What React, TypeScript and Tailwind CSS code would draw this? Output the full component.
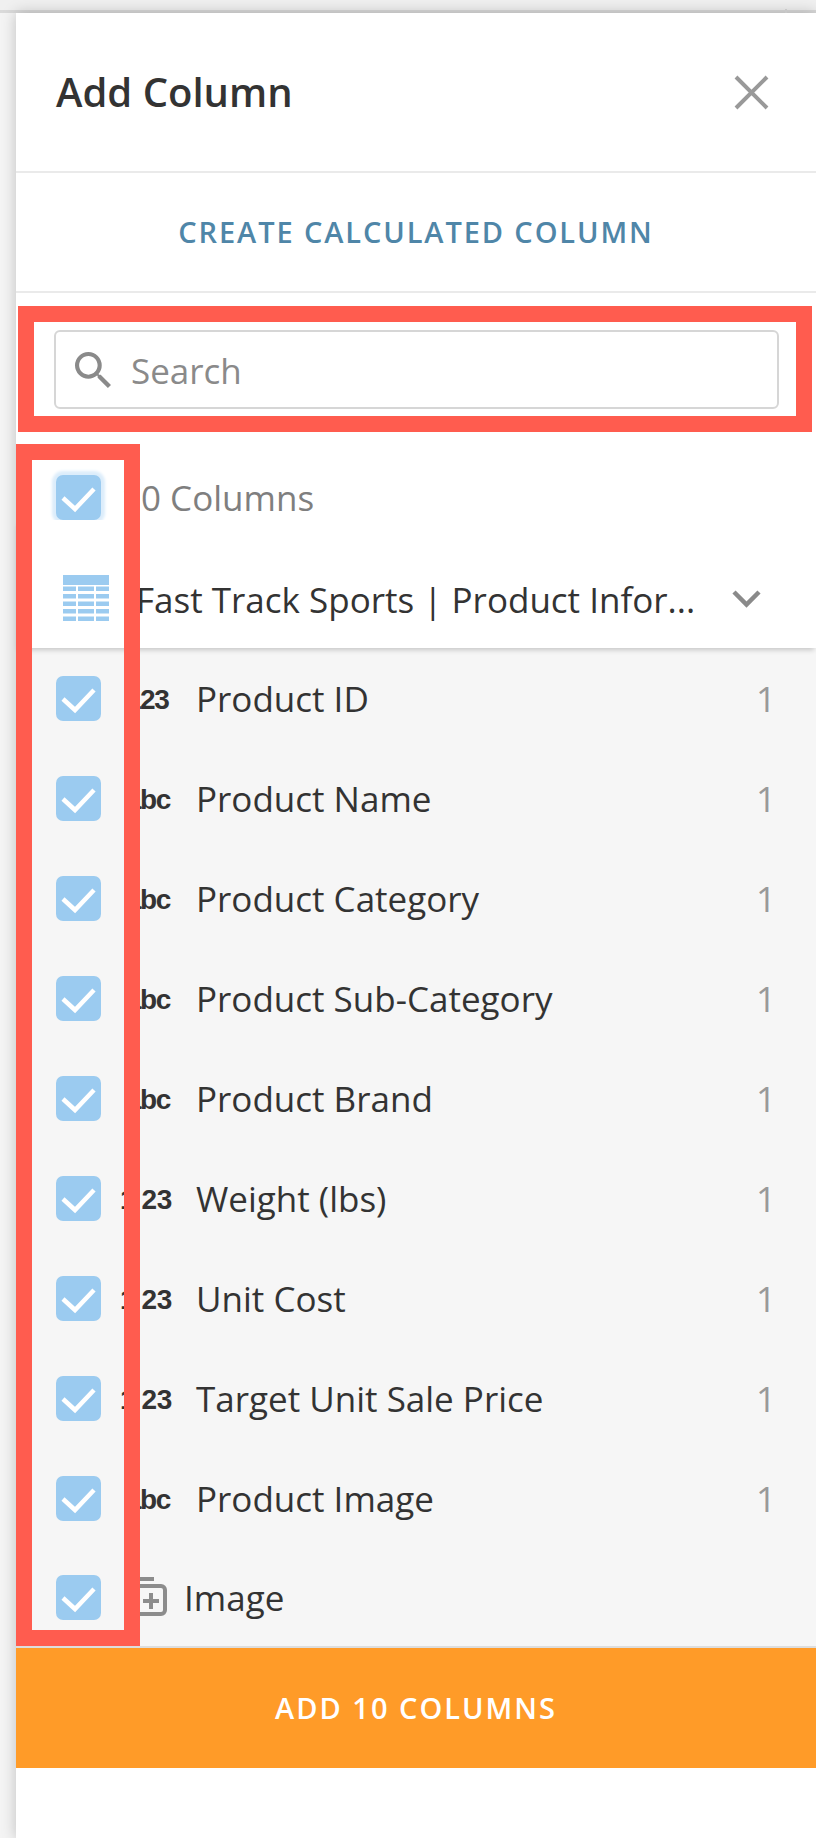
const columns = [
  { name: "Product ID", kind: "id" },
  { name: "Product Name", kind: "abc" },
  { name: "Product Category", kind: "abc" },
  { name: "Product Sub-Category", kind: "abc" },
  { name: "Product Brand", kind: "abc" },
  { name: "Weight (lbs)", kind: "num" },
  { name: "Unit Cost", kind: "num" },
  { name: "Target Unit Sale Price", kind: "num" },
  { name: "Product Image", kind: "abc" },
];

function Check({ focused = false }: { focused?: boolean }) {
  return (
    <span
      className={`flex h-[45px] w-[45px] shrink-0 items-center justify-center rounded-[7px] bg-[#9bcbf0] ${
        focused ? "shadow-[0_0_3px_4px_#dcedfb]" : ""
      }`}
    >
      <svg viewBox="0 0 45 45" className="h-[45px] w-[45px]" fill="none" stroke="#fff" strokeWidth="4.5">
        <path d="M7 23l12 11L38 14" />
      </svg>
    </span>
  );
}

function TableIcon() {
  const ys = [11.5, 19, 26.5, 34, 41.5];
  return (
    <svg viewBox="0 0 46 46" className="-mt-1 h-[46px] w-[46px]" fill="#9bcbf0">
      <rect x="0" y="0" width="46" height="10" />
      {ys.map((y) => (
        <g key={y}>
          <rect x="0" y={y} width="13" height="4.5" />
          <rect x="15" y={y} width="16" height="4.5" />
          <rect x="33" y={y} width="13" height="4.5" />
        </g>
      ))}
    </svg>
  );
}

function TypeIcon({ kind }: { kind: string }) {
  const base = "mt-1 w-[95px] shrink-0 whitespace-nowrap text-[28px] font-bold leading-none text-[#333] font-['Liberation_Sans',sans-serif]";
  if (kind === "num") {
    return (
      <span className={`${base} pl-[19px] tracking-[-0.5px]`}>
        <span className="tracking-[6px]">1</span>23
      </span>
    );
  }
  return <span className={`${base} pl-[25px] tracking-[-1.5px]`}>{kind === "abc" ? "abc" : "123"}</span>;
}

export default function App() {
  return (
    <div className="relative h-[1838px] w-[816px] overflow-hidden bg-[#f4f4f4] font-['Open_Sans',sans-serif]">
      <div className="h-[13px] border-b-[3px] border-[#dadada] bg-[#f0f0f0]" />
      <div className="absolute left-[785px] top-[9px] h-1 w-[2px] bg-[#c8c8c8]" />
      <div className="ml-4 h-[1825px] bg-white shadow-[0_0_14px_rgba(0,0,0,0.22)]">
        <div className="flex h-[160px] items-center justify-between border-b-2 border-[#eaeaea] pl-10 pr-[47px]">
          <h1 className="text-[40px] font-[550] leading-none text-[#333]">Add Column</h1>
          <svg viewBox="0 0 35 35" className="h-[35px] w-[35px]" fill="none" stroke="#999" strokeWidth="4">
            <path d="M2 2l31 31M33 2L2 33" />
          </svg>
        </div>
        <div className="flex h-[120px] items-center justify-center border-b-2 border-[#eaeaea]">
          <span className="text-[29px] font-semibold tracking-[1.9px] text-[#4f86a8]">CREATE CALCULATED COLUMN</span>
        </div>
        <div className="pl-[38px] pt-[37px]">
          <div className="flex h-[79px] w-[725px] items-center rounded-md border-2 border-[#d6d6d6] pl-[19px]">
            <svg viewBox="3 3 17.5 17.5" className="h-9 w-9" fill="#8a8a8a">
              <path d="M15.5 14h-.79l-.28-.27A6.471 6.471 0 0 0 16 9.5 6.5 6.5 0 1 0 9.5 16c1.61 0 3.09-.59 4.23-1.57l.27.28v.79l5 4.99L20.49 19l-4.99-5zm-6 0C7.01 14 5 11.99 5 9.5S7.01 5 9.5 5 14 7.01 14 9.5 11.99 14 9.5 14z" />
            </svg>
            <span className="ml-[20px] mt-1 text-[35px] text-[#8a8a8a]">Search</span>
          </div>
        </div>
        <div className="flex items-center pl-10 pt-[66px]">
          <Check focused />
          <span className="ml-[20px] text-[35px] leading-none text-[#7f7f7f]">10 Columns</span>
        </div>
        <div className="relative z-10 flex h-[128px] items-center bg-white pl-[47px] pr-[55px] pt-8 shadow-[0_4px_5px_-2px_rgba(0,0,0,0.2)]">
          <TableIcon />
          <span className="ml-[27px] whitespace-nowrap text-[35px] text-[#333]">Fast Track Sports | Product Infor...</span>
          <svg viewBox="0 0 29 18" className="-mt-[2px] ml-auto h-[18px] w-[29px]" fill="none" stroke="#8a8a8a" strokeWidth="4.5">
            <path d="M2 2l12.500 12.500L27 2" />
          </svg>
        </div>
        <div className="h-[1000px] border-b-2 border-[#ddd] bg-[#f6f6f6]">
          {columns.map((c) => (
            <div key={c.name} className="flex h-[100px] items-center pl-10 pr-10">
              <Check />
              <TypeIcon kind={c.kind} />
              <span className="mt-[3px] whitespace-nowrap text-[35px] text-[#333]">{c.name}</span>
              <span className="ml-auto mt-[3px] text-[35px] text-[#999]">1</span>
            </div>
          ))}
          <div className="flex h-[98px] items-center pl-10">
            <Check />
            <svg viewBox="0 0 47 42" className="ml-[19px] h-[42px] w-[47px]" fill="none" stroke="#8c8c8c" strokeWidth="4">
              <path d="M10 3h24" />
              <rect x="7" y="10" width="38" height="28" rx="4" />
              <path d="M31 17v16M23 25h16" />
            </svg>
            <span className="ml-[17px] mt-[3px] text-[35px] text-[#333]">Image</span>
          </div>
        </div>
        <div className="flex h-[120px] items-center justify-center bg-[#ff9b28]">
          <span className="text-[29px] font-semibold tracking-[2px] text-white">ADD 10 COLUMNS</span>
        </div>
      </div>
      <div className="absolute left-[18px] top-[306px] z-20 h-[126px] w-[794px] border-[16px] border-[#ff5c4f]" />
      <div className="absolute left-4 top-[444px] z-20 h-[1202px] w-[124px] border-[16px] border-[#ff5c4f]" />
    </div>
  );
}
